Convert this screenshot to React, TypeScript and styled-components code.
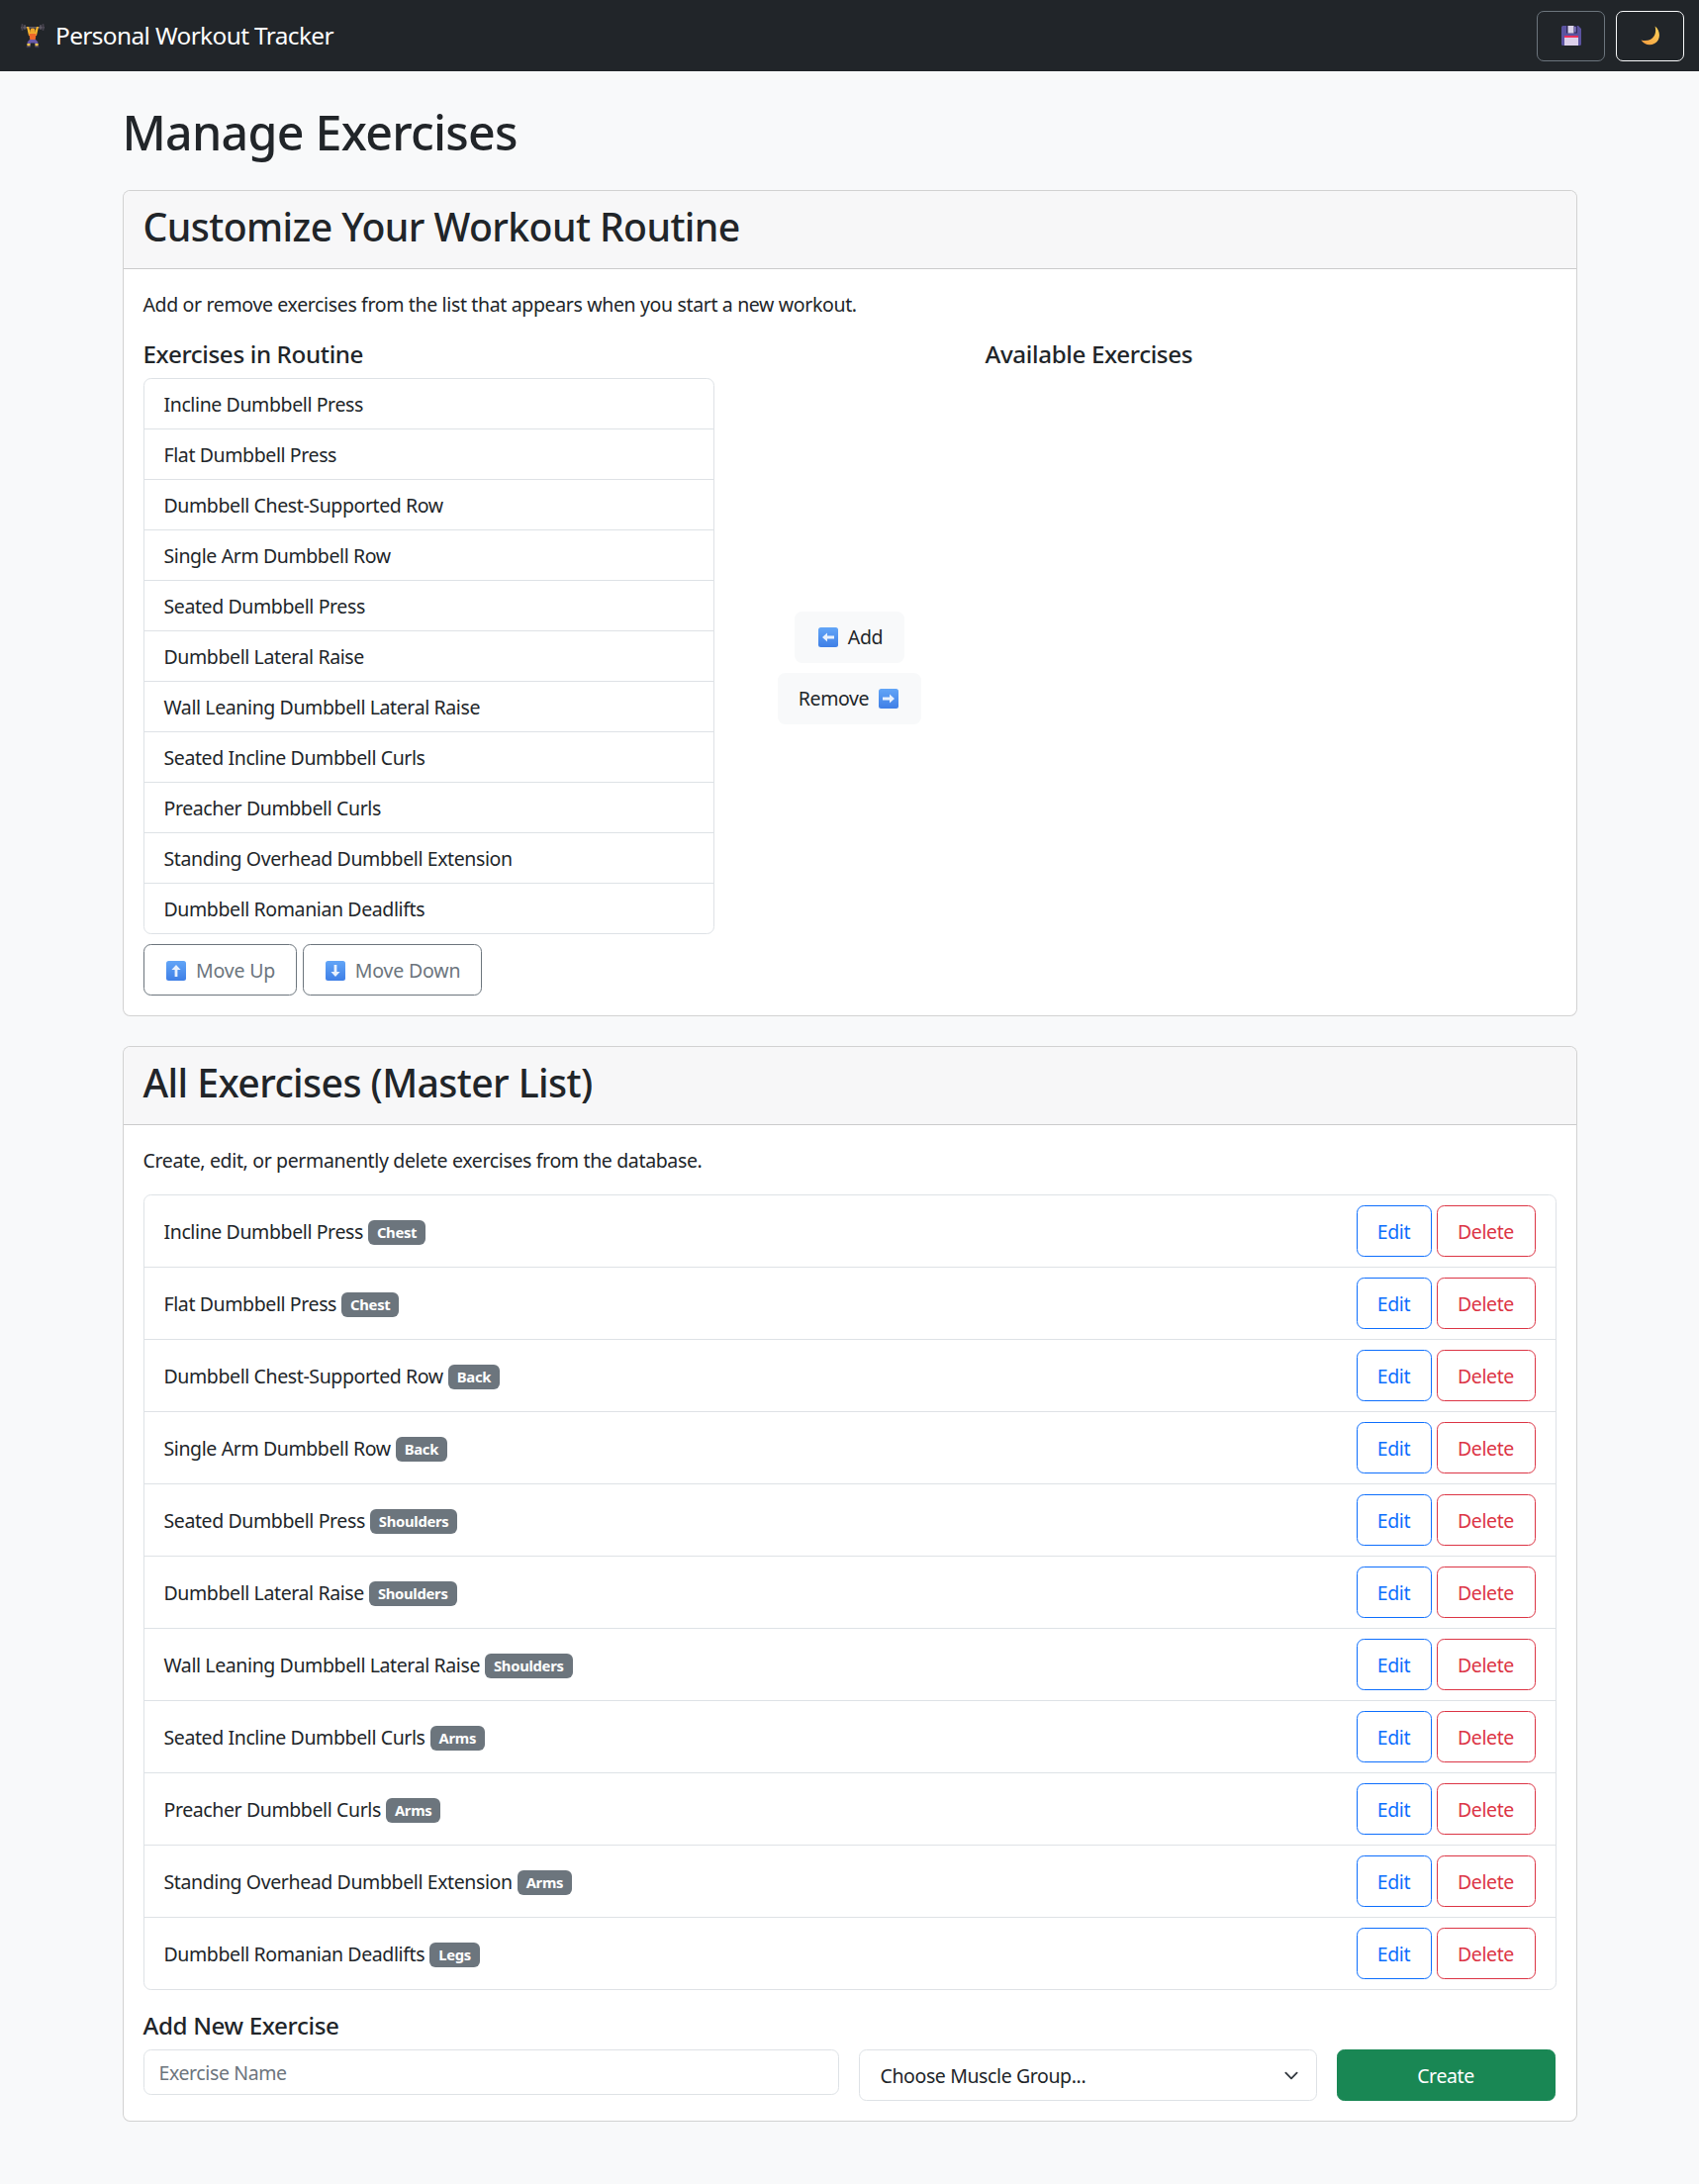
import React from "react";
import styled, { createGlobalStyle } from "styled-components";

const exercises: [string, string][] = [
  ["Incline Dumbbell Press", "Chest"],
  ["Flat Dumbbell Press", "Chest"],
  ["Dumbbell Chest-Supported Row", "Back"],
  ["Single Arm Dumbbell Row", "Back"],
  ["Seated Dumbbell Press", "Shoulders"],
  ["Dumbbell Lateral Raise", "Shoulders"],
  ["Wall Leaning Dumbbell Lateral Raise", "Shoulders"],
  ["Seated Incline Dumbbell Curls", "Arms"],
  ["Preacher Dumbbell Curls", "Arms"],
  ["Standing Overhead Dumbbell Extension", "Arms"],
  ["Dumbbell Romanian Deadlifts", "Legs"],
];

const chevron =
  "data:image/svg+xml,%3csvg xmlns='http://www.w3.org/2000/svg' viewBox='0 0 16 16'%3e%3cpath fill='none' stroke='%23343a40' stroke-linecap='round' stroke-linejoin='round' stroke-width='2' d='m2 5 6 6 6-6'/%3e%3c/svg%3e";

const Global = createGlobalStyle`
  html, body { margin: 0; padding: 0; background: #f8f9fa; }
  body {
    min-height: 2207px;
    font-family: "Noto Sans", sans-serif;
    color: #212529;
    font-size: 19.5px;
    line-height: 30px;
    letter-spacing: -0.02em;
  }
  * { box-sizing: border-box; }
`;

const Nav = styled.nav`
  height: 72px;
  background: #212529;
  display: flex;
  align-items: center;
  justify-content: space-between;
  padding: 0 15px 0 20px;
`;
const Brand = styled.div`
  display: flex;
  align-items: center;
  gap: 10px;
  color: #fff;
  font-size: 24.4px;
  letter-spacing: -0.025em;
`;
const NavActions = styled.div`
  display: flex;
  gap: 11px;
`;
const NavButton = styled.button<{ $light?: boolean }>`
  width: 69px;
  height: 51px;
  display: flex;
  align-items: center;
  justify-content: center;
  background: transparent;
  border: 1px solid ${(p) => (p.$light ? "#f8f9fa" : "#6c757d")};
  border-radius: 7px;
  padding: 0;
`;
const Main = styled.main`
  width: 1470px;
  margin: 0 auto;
  padding-top: 31px;
`;
const PageTitle = styled.h1`
  margin: 0 0 29px;
  font-size: 48.3px;
  line-height: 60px;
  font-weight: 500;
  letter-spacing: -0.015em;
`;
const Card = styled.section`
  background: #fff;
  border: 1px solid rgba(0, 0, 0, 0.175);
  border-radius: 7.5px;
  margin-bottom: 30px;
  overflow: hidden;
`;
const CardHeader = styled.header`
  height: 79px;
  padding: 0 20px 6px;
  display: flex;
  align-items: center;
  background: #f7f7f8;
  border-bottom: 1px solid rgba(0, 0, 0, 0.175);
`;
const CardTitle = styled.h2`
  margin: 0;
  font-size: 39.2px;
  line-height: 48px;
  font-weight: 500;
  letter-spacing: -0.015em;
`;
const CardBody = styled.div`
  padding: 21px 20px 20px;
`;
const Lead = styled.p<{ $gap: number }>`
  margin: 0 0 ${(p) => p.$gap}px;
  letter-spacing: -0.018em;
`;
const Columns = styled.div`
  display: grid;
  grid-template-columns: 577px 1fr 577px;
`;
const SectionTitle = styled.h5`
  margin: 0 0 9px;
  font-size: 24.2px;
  line-height: 30px;
  font-weight: 500;
  letter-spacing: -0.015em;
`;
const List = styled.ul`
  list-style: none;
  margin: 0;
  padding: 0;
  border: 1px solid #dee2e6;
  border-radius: 7.5px;
  overflow: hidden;
`;
const RoutineItem = styled.li`
  height: 51px;
  padding: 11px 20px 9px;
  border-bottom: 1px solid #dee2e6;
  &:last-child {
    height: 50px;
    border-bottom: 0;
  }
`;
const MoveBar = styled.div`
  display: flex;
  gap: 6px;
  margin-top: 10px;
`;
const Button = styled.button`
  height: 52px;
  display: inline-flex;
  align-items: center;
  justify-content: center;
  gap: 10px;
  padding: 1px 0 0;
  background: transparent;
  font: inherit;
  letter-spacing: inherit;
  border: 1px solid transparent;
  border-radius: 7.5px;
  cursor: pointer;
`;
const MoveButton = styled(Button)<{ $w: number }>`
  width: ${(p) => p.$w}px;
  padding-left: 2px;
  color: #6c757d;
  border-color: #6c757d;
  letter-spacing: -0.008em;
`;
const Middle = styled.div`
  display: flex;
  flex-direction: column;
  align-items: center;
  justify-content: center;
  gap: 10px;
`;
const TransferButton = styled(Button)<{ $w: number; $lead?: number; $trail?: number }>`
  width: ${(p) => p.$w}px;
  padding-left: ${(p) => p.$lead ?? 0}px;
  padding-right: ${(p) => p.$trail ?? 0}px;
  background: #f8f9fa;
  color: #212529;
`;
const LibraryItem = styled.li`
  height: 73px;
  display: flex;
  align-items: center;
  justify-content: space-between;
  padding: 0 20px;
  border-bottom: 1px solid #dee2e6;
  &:last-child {
    height: 72px;
    border-bottom: 0;
  }
`;
const ItemName = styled.div`
  display: flex;
  align-items: center;
  gap: 5px;
  padding-top: 2px;
`;
const Badge = styled.span`
  height: 25px;
  display: inline-flex;
  align-items: center;
  padding: 0 9px;
  margin-top: 1px;
  background: #6c757d;
  color: #fff;
  border-radius: 6px;
  font-size: 14.8px;
  line-height: 25px;
  font-weight: 700;
  letter-spacing: -0.02em;
`;
const ItemActions = styled.div`
  display: flex;
  gap: 5px;
`;
const EditButton = styled(Button)`
  width: 76px;
  color: #0d6efd;
  border-color: #0d6efd;
`;
const DeleteButton = styled(Button)`
  width: 100px;
  color: #dc3545;
  border-color: #dc3545;
`;
const AddTitle = styled(SectionTitle)`
  margin: 21px 0 9px;
`;
const AddForm = styled.div`
  display: grid;
  grid-template-columns: 703px 463px 221px;
  gap: 20px;
  align-items: start;
`;
const NameInput = styled.input`
  width: 100%;
  height: 46px;
  padding: 1px 15px 0;
  font: inherit;
  letter-spacing: inherit;
  color: #212529;
  background: #fff;
  border: 1px solid #dee2e6;
  border-radius: 7.5px;
  &::placeholder {
    color: #6c757d;
    opacity: 1;
  }
`;
const GroupSelect = styled.select`
  width: 100%;
  height: 52px;
  padding: 1px 45px 0 21px;
  font: inherit;
  letter-spacing: inherit;
  color: #212529;
  background: #fff url("${chevron}") no-repeat right 15px center / 20px 15px;
  border: 1px solid #dee2e6;
  border-radius: 7.5px;
  appearance: none;
`;
const CreateButton = styled(Button)`
  width: 100%;
  color: #fff;
  background: #198754;
  border-color: #198754;
`;

const KeycapDefs = () => (
  <defs>
    <linearGradient id="keycap" x1="0" y1="0" x2="0" y2="1">
      <stop offset="0" stopColor="#62a5f7" />
      <stop offset="1" stopColor="#3f7fe6" />
    </linearGradient>
  </defs>
);

const arrowPaths = {
  left: "M4 10 L9 5.4 V8.6 H16 V11.4 H9 V14.6 Z",
  right: "M16 10 L11 5.4 V8.6 H4 V11.4 H11 V14.6 Z",
  up: "M10 4 L5.4 9 H8.6 V16 H11.4 V9 H14.6 Z",
  down: "M10 16 L5.4 11 H8.6 V4 H11.4 V11 H14.6 Z",
};

const Arrow = ({ dir }: { dir: keyof typeof arrowPaths }) => (
  <svg width="20" height="20" viewBox="0 0 20 20" aria-hidden>
    <KeycapDefs />
    <rect x="0" y="0" width="20" height="20" rx="2.5" fill="url(#keycap)" />
    <path d={arrowPaths[dir]} fill="#e8f1fd" />
  </svg>
);

const Lifter = () => (
  <svg width="26" height="26" viewBox="0 0 26 26" aria-hidden>
    <rect x="1" y="4" width="24" height="1.6" fill="#5f5a66" />
    <rect x="1.5" y="1" width="2" height="7" rx="1" fill="#45414c" />
    <rect x="4.2" y="2" width="1.6" height="5" rx=".8" fill="#5f5a66" />
    <rect x="22.5" y="1" width="2" height="7" rx="1" fill="#45414c" />
    <rect x="20.2" y="2" width="1.6" height="5" rx=".8" fill="#5f5a66" />
    <path d="M7 4 L9 4 L11 10 L15 10 L17 4 L19 4 L17 13 L9 13 Z" fill="#f7b52e" />
    <circle cx="13" cy="8" r="2.6" fill="#f0a62a" />
    <path d="M9.4 11 L16.6 11 L15.6 18 L10.4 18 Z" fill="#f0682a" />
    <path d="M10 17 H16 L18.4 19.5 L18 24 H15.8 L15 20.6 H11 L10.2 24 H8 L7.6 19.5 Z" fill="#6a5aa8" />
    <rect x="7.4" y="21" width="3" height="2.6" fill="#f7c84a" />
    <rect x="15.6" y="21" width="3" height="2.6" fill="#f7c84a" />
    <rect x="6.6" y="23.4" width="4.2" height="1.8" rx=".6" fill="#3f3a52" />
    <rect x="15.2" y="23.4" width="4.2" height="1.8" rx=".6" fill="#3f3a52" />
  </svg>
);

const Floppy = () => (
  <svg width="20" height="20" viewBox="0 0 20 20" aria-hidden>
    <path d="M1.5 0 H17 L20 3 V18.5 A1.5 1.5 0 0 1 18.5 20 H1.5 A1.5 1.5 0 0 1 0 18.5 V1.5 A1.5 1.5 0 0 1 1.5 0 Z" fill="#5b53a0" />
    <rect x="5" y="0" width="11" height="7.5" fill="#2f2a5a" />
    <rect x="6.5" y="0" width="6" height="7.5" fill="#d9d2e8" />
    <rect x="12.8" y="1" width="2" height="5.5" fill="#7a70b8" />
    <rect x="3" y="10" width="14" height="10" fill="#dcd0ea" />
    <rect x="3" y="10" width="14" height="2" fill="#ec2f5c" />
  </svg>
);

const Moon = () => (
  <svg width="20" height="20" viewBox="0 0 20 20" aria-hidden>
    <defs>
      <linearGradient id="moon" x1="1" y1="0" x2="0" y2="1">
        <stop offset="0" stopColor="#fcd45a" />
        <stop offset="1" stopColor="#f59a3e" />
      </linearGradient>
    </defs>
    <path d="M14.5 0.5 C20.5 5 20.5 14.5 14 18 C9 20.8 3.5 19 0.5 14.5 C6 16 11 14.5 13.5 10.5 C15.3 7.5 15.6 3.8 14.5 0.5 Z" fill="url(#moon)" />
  </svg>
);

export default function App() {
  return (
    <>
      <Global />
      <Nav>
        <Brand>
          <Lifter />
          Personal Workout Tracker
        </Brand>
        <NavActions>
          <NavButton aria-label="Save">
            <Floppy />
          </NavButton>
          <NavButton $light aria-label="Theme">
            <Moon />
          </NavButton>
        </NavActions>
      </Nav>
      <Main>
        <PageTitle>Manage Exercises</PageTitle>
        <Card>
          <CardHeader>
            <CardTitle>Customize Your Workout Routine</CardTitle>
          </CardHeader>
          <CardBody>
            <Lead $gap={20}>Add or remove exercises from the list that appears when you start a new workout.</Lead>
            <Columns>
              <div>
                <SectionTitle>Exercises in Routine</SectionTitle>
                <List>
                  {exercises.map(([name]) => (
                    <RoutineItem key={name}>{name}</RoutineItem>
                  ))}
                </List>
                <MoveBar>
                  <MoveButton $w={155}>
                    <Arrow dir="up" />
                    Move Up
                  </MoveButton>
                  <MoveButton $w={181}>
                    <Arrow dir="down" />
                    Move Down
                  </MoveButton>
                </MoveBar>
              </div>
              <Middle>
                <TransferButton $w={111} $lead={2}>
                  <Arrow dir="left" />
                  Add
                </TransferButton>
                <TransferButton $w={145} $trail={2}>
                  Remove
                  <Arrow dir="right" />
                </TransferButton>
              </Middle>
              <div>
                <SectionTitle>Available Exercises</SectionTitle>
              </div>
            </Columns>
          </CardBody>
        </Card>
        <Card>
          <CardHeader>
            <CardTitle>All Exercises (Master List)</CardTitle>
          </CardHeader>
          <CardBody>
            <Lead $gap={19}>Create, edit, or permanently delete exercises from the database.</Lead>
            <List>
              {exercises.map(([name, group]) => (
                <LibraryItem key={name}>
                  <ItemName>
                    {name}
                    <Badge>{group}</Badge>
                  </ItemName>
                  <ItemActions>
                    <EditButton>Edit</EditButton>
                    <DeleteButton>Delete</DeleteButton>
                  </ItemActions>
                </LibraryItem>
              ))}
            </List>
            <AddTitle>Add New Exercise</AddTitle>
            <AddForm>
              <NameInput placeholder="Exercise Name" />
              <GroupSelect defaultValue="">
                <option value="">Choose Muscle Group...</option>
              </GroupSelect>
              <CreateButton>Create</CreateButton>
            </AddForm>
          </CardBody>
        </Card>
      </Main>
    </>
  );
}
